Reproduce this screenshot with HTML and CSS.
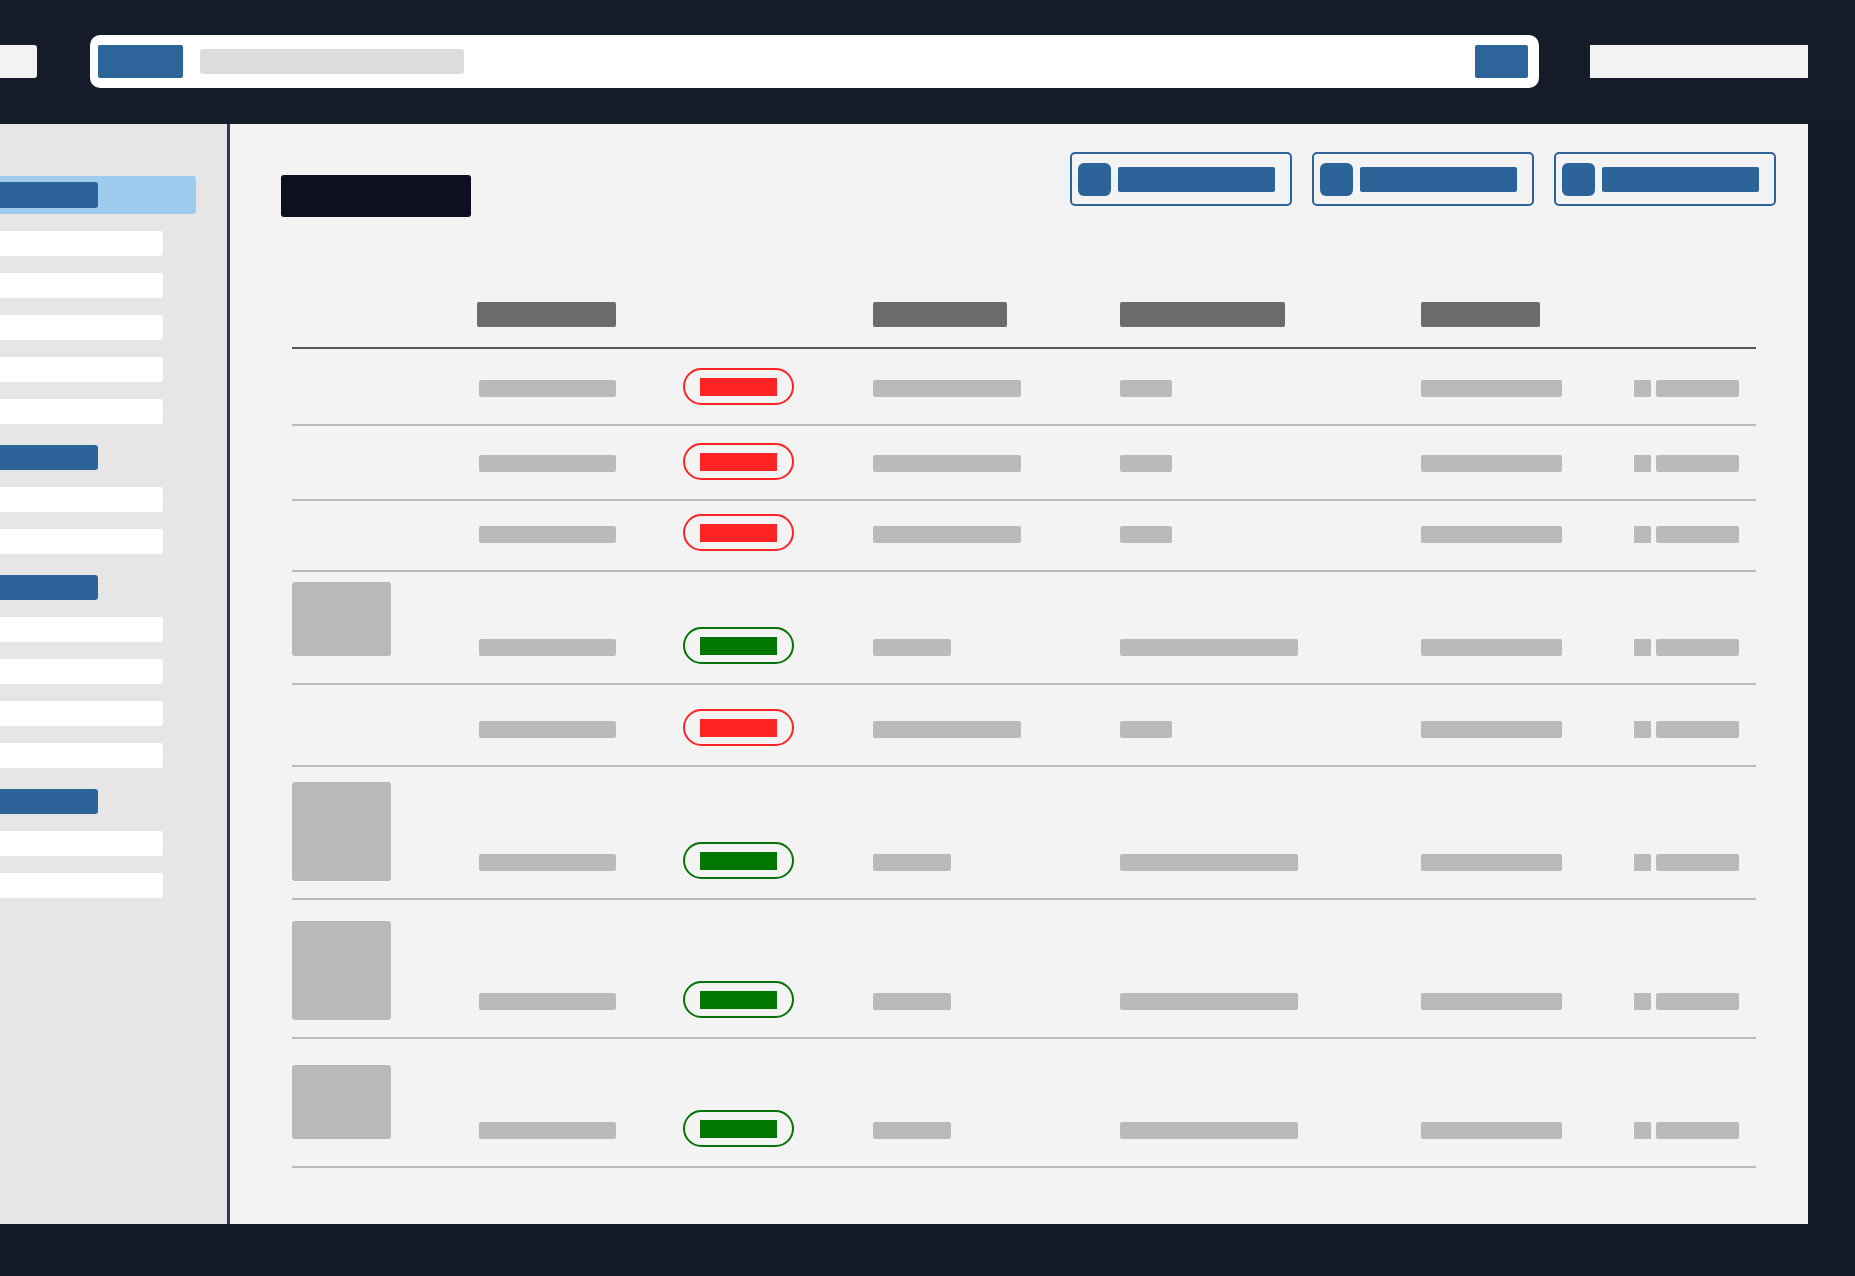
FILE: index.html
```html
<!DOCTYPE html>
<html lang="en">
<head>
<meta charset="utf-8">
<title>Orders</title>
<link rel="stylesheet" href="styles.css">
</head>
<body>
<header class="topbar">
  <div class="stub-left"></div>
  <div class="search">
    <div class="search-btn"></div>
    <div class="search-field"></div>
    <div class="search-go"></div>
  </div>
  <div class="stub-right"></div>
</header>

<div class="layout">
  <nav class="sidebar">
    <div class="nav-active"><span class="nav-active-bar"></span></div>
    <div class="nav-item"></div>
    <div class="nav-item"></div>
    <div class="nav-item"></div>
    <div class="nav-item"></div>
    <div class="nav-item"></div>
    <div class="nav-head"></div>
    <div class="nav-item"></div>
    <div class="nav-item"></div>
    <div class="nav-head"></div>
    <div class="nav-item"></div>
    <div class="nav-item"></div>
    <div class="nav-item"></div>
    <div class="nav-item"></div>
    <div class="nav-head"></div>
    <div class="nav-item"></div>
    <div class="nav-item"></div>
  </nav>

  <main class="main">
    <div class="toolbar">
      <div class="title"></div>
      <div class="actions">
        <div class="action"><span class="action-icon"></span><span class="action-label"></span></div>
        <div class="action"><span class="action-icon"></span><span class="action-label"></span></div>
        <div class="action"><span class="action-icon"></span><span class="action-label"></span></div>
      </div>
    </div>

    <div class="table">
      <div class="row head">
        <span></span>
        <span class="hbar w139"></span>
        <span></span>
        <span class="hbar w134"></span>
        <span class="hbar w165"></span>
        <span class="hbar w119"></span>
        <span></span>
      </div>

      <div class="row r1">
        <span></span>
        <span class="bar first"></span>
        <span class="badge red"><span class="badge-fill"></span></span>
        <span class="bar w148"></span>
        <span class="bar w52"></span>
        <span class="bar w141"></span>
        <span class="pair"><span class="sq"></span><span class="bar w83"></span></span>
      </div>

      <div class="row r2">
        <span></span>
        <span class="bar first"></span>
        <span class="badge red"><span class="badge-fill"></span></span>
        <span class="bar w148"></span>
        <span class="bar w52"></span>
        <span class="bar w141"></span>
        <span class="pair"><span class="sq"></span><span class="bar w83"></span></span>
      </div>

      <div class="row r3">
        <span></span>
        <span class="bar first"></span>
        <span class="badge red"><span class="badge-fill"></span></span>
        <span class="bar w148"></span>
        <span class="bar w52"></span>
        <span class="bar w141"></span>
        <span class="pair"><span class="sq"></span><span class="bar w83"></span></span>
      </div>

      <div class="row r4">
        <span class="thumb"></span>
        <span class="bar first"></span>
        <span class="badge green"><span class="badge-fill"></span></span>
        <span class="bar w78"></span>
        <span class="bar w178"></span>
        <span class="bar w141"></span>
        <span class="pair"><span class="sq"></span><span class="bar w83"></span></span>
      </div>

      <div class="row r5">
        <span></span>
        <span class="bar first"></span>
        <span class="badge red"><span class="badge-fill"></span></span>
        <span class="bar w148"></span>
        <span class="bar w52"></span>
        <span class="bar w141"></span>
        <span class="pair"><span class="sq"></span><span class="bar w83"></span></span>
      </div>

      <div class="row r6">
        <span class="thumb tall"></span>
        <span class="bar first"></span>
        <span class="badge green"><span class="badge-fill"></span></span>
        <span class="bar w78"></span>
        <span class="bar w178"></span>
        <span class="bar w141"></span>
        <span class="pair"><span class="sq"></span><span class="bar w83"></span></span>
      </div>

      <div class="row r7">
        <span class="thumb tall"></span>
        <span class="bar first"></span>
        <span class="badge green"><span class="badge-fill"></span></span>
        <span class="bar w78"></span>
        <span class="bar w178"></span>
        <span class="bar w141"></span>
        <span class="pair"><span class="sq"></span><span class="bar w83"></span></span>
      </div>

      <div class="row r8">
        <span class="thumb"></span>
        <span class="bar first"></span>
        <span class="badge green"><span class="badge-fill"></span></span>
        <span class="bar w78"></span>
        <span class="bar w178"></span>
        <span class="bar w141"></span>
        <span class="pair"><span class="sq"></span><span class="bar w83"></span></span>
      </div>
    </div>
  </main>
</div>
</body>
</html>
```

FILE: styles.css
```css
* { box-sizing: border-box; }

html, body {
  margin: 0;
  padding: 0;
}

body {
  width: 1855px;
  height: 1276px;
  background: #151a28;
  font-family: "Liberation Sans", Arial, sans-serif;
  overflow: hidden;
}

/* ---------- top bar ---------- */
.topbar {
  height: 124px;
  display: flex;
  align-items: flex-start;
  background: #161b29;
}

.stub-left {
  width: 37px;
  height: 33px;
  margin-top: 45px;
  background: #f2f2f2;
  border-radius: 0 3px 3px 0;
}

.search {
  width: 1449px;
  height: 53px;
  margin-top: 35px;
  margin-left: 53px;
  background: #ffffff;
  border-radius: 10px;
  display: flex;
  align-items: center;
  padding: 0 11px 0 8px;
}

.search-btn {
  width: 85px;
  height: 33px;
  background: #2d6499;
  border-radius: 2px;
}

.search-field {
  width: 264px;
  height: 25px;
  margin-left: 17px;
  background: #dddddd;
  border-radius: 3px;
}

.search-go {
  width: 53px;
  height: 33px;
  margin-left: auto;
  background: #2d6499;
  border-radius: 2px;
}

.stub-right {
  width: 218px;
  height: 33px;
  margin-top: 45px;
  margin-left: 51px;
  background: #f2f2f2;
}

/* ---------- layout ---------- */
.layout {
  display: flex;
  width: 1808px;
  height: 1100px;
}

.sidebar {
  width: 230px;
  flex: none;
  background: #e6e6e6;
  border-right: 3px solid #3a3260;
  padding-top: 52px;
  display: flex;
  flex-direction: column;
  align-items: flex-start;
  gap: 17px;
}

.nav-active {
  width: 196px;
  height: 38px;
  background: #9fcbee;
  border-radius: 0 3px 3px 0;
  display: flex;
  align-items: center;
}

.nav-active-bar {
  width: 98px;
  height: 26px;
  background: #2c6399;
  border-radius: 0 3px 3px 0;
}

.nav-item {
  width: 163px;
  height: 25px;
  background: #ffffff;
  border-radius: 0 3px 3px 0;
}

.nav-head {
  width: 98px;
  height: 25px;
  margin-top: 4px;
  background: #2c6399;
  border-radius: 0 3px 3px 0;
}

/* ---------- main ---------- */
.main {
  flex: 1;
  background: #f3f3f3;
}

.toolbar {
  height: 93px;
  display: flex;
  justify-content: space-between;
  align-items: flex-start;
  padding: 28px 32px 0 51px;
}

.title {
  width: 190px;
  height: 42px;
  margin-top: 23px;
  background: #0d1020;
  border-radius: 3px;
}

.actions {
  display: flex;
  gap: 20px;
}

.action {
  width: 222px;
  height: 54px;
  border: 2px solid #2c6399;
  border-radius: 5px;
  display: flex;
  align-items: center;
  padding-left: 6px;
  gap: 7px;
}

.action-icon {
  width: 33px;
  height: 33px;
  background: #2c6399;
  border-radius: 6px;
}

.action-label {
  width: 157px;
  height: 25px;
  background: #2c6399;
  border-radius: 2px;
}

/* ---------- table ---------- */
.table {
  margin: 65px 0 0 62px;
  width: 1464px;
}

.row {
  display: grid;
  grid-template-columns: 185px 206px 190px 247px 301px 213px 1fr;
  align-items: end;
  justify-items: start;
  padding-bottom: 19px;
  border-bottom: 2px solid #bbbbbb;
}

.row.head {
  height: 67px;
  padding-bottom: 20px;
  border-bottom-color: #575757;
}

.r1 { height: 77px; }
.r2 { height: 75px; }
.r3 { height: 71px; }
.r4 { height: 113px; }
.r5 { height: 82px; }
.r6 { height: 133px; }
.r7 { height: 139px; }
.r8 { height: 129px; }

.hbar {
  height: 25px;
  background: #6b6b6b;
  border-radius: 2px;
}

.bar {
  height: 17px;
  margin-bottom: 8px;
  background: #bababa;
  border-radius: 2px;
}

.bar.first { width: 137px; margin-left: 2px; }

.w52 { width: 52px; }
.w78 { width: 78px; }
.w83 { width: 83px; }
.w119 { width: 119px; }
.w134 { width: 134px; }
.w139 { width: 139px; }
.w141 { width: 141px; }
.w148 { width: 148px; }
.w165 { width: 165px; }
.w178 { width: 178px; }

.pair {
  display: flex;
  align-items: flex-end;
  gap: 5px;
}

.pair .bar { margin-bottom: 8px; }

.sq {
  width: 17px;
  height: 17px;
  margin-bottom: 8px;
  background: #bababa;
  border-radius: 1px;
}

.thumb {
  width: 99px;
  height: 74px;
  margin-bottom: 8px;
  background: #b9b9b9;
  border-radius: 3px;
}

.thumb.tall {
  height: 99px;
  margin-bottom: -2px;
}

.badge {
  width: 111px;
  height: 37px;
  border: 2px solid;
  border-radius: 19px;
  padding: 8px 15px 7px;
  display: flex;
}

.badge-fill {
  width: 77px;
  height: 18px;
}

.badge.red { border-color: #ff2424; }
.badge.red .badge-fill { background: #ff2424; }

.badge.green { border-color: #057305; }
.badge.green .badge-fill { background: #017601; }
```
